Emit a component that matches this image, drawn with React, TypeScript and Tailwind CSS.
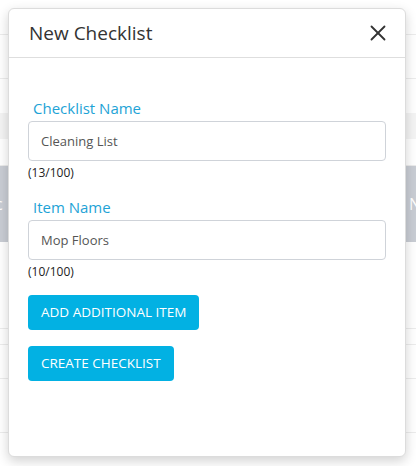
import { X } from "lucide-react";

const font = { fontFamily: '"Open Sans", "Noto Sans", Arial, sans-serif' };

const Field = ({ label, value, count }: { label: string; value: string; count: string }) => {
  return (
    <div className="flex flex-col">
      <label className="pl-[5px] text-[15px] leading-[20px] text-[#1ea3d6]">{label}</label>
      <input
        readOnly
        value={value}
        className="mt-[3px] h-[40px] w-full rounded-[4px] border border-[#cfd3d9] px-3 text-[13px] text-[#555] outline-none"
      />
      <span className="mt-[2px] text-[12px] leading-[20px] text-[#222]">{count}</span>
    </div>
  );
};

export default function App() {
  return (
    <div className="relative h-[466px] w-[416px] overflow-hidden bg-white" style={font}>
      {/* page behind the dialog */}
      <div className="flex flex-col">
        <div className="h-[35px] border-b border-[#ececec]" />
        <div className="h-[44px] border-b border-[#ececec]" />
        <div className="h-[34px]" />
        <div className="h-[26px] bg-[#f4f4f4]" />
        <div className="h-[27px] border-b border-[#ececec]" />
        <div className="flex h-[76px] items-center justify-between bg-[#c9cdd4] px-[1px] text-[16px] text-white">
          <span className="-ml-[6px]">c</span>
          <span className="-mr-[6px]">N</span>
        </div>
        <div className="h-[87px] border-b border-[#ececec]" />
        <div className="h-[16px] border-b border-[#ececec]" />
        <div className="h-[34px] border-b border-[#ececec]" />
        <div className="h-[54px] border-b border-[#ececec]" />
      </div>

      {/* dialog */}
      <div className="absolute left-[8px] top-[8px] flex h-[449px] w-[398px] flex-col rounded-[6px] border border-[#dcdcdc] bg-white shadow-[0_4px_12px_rgba(0,0,0,0.18)]">
        <div className="flex h-[49px] items-center justify-between border-b border-[#dedede] pl-[20px] pr-[14px]">
          <h2 className="text-[19px] text-[#333]">New Checklist</h2>
          <X size={26} strokeWidth={1.7} className="text-[#333]" />
        </div>
        <div className="flex flex-col px-[19px] pt-[40px]">
          <Field label="Checklist Name" value="Cleaning List" count="(13/100)" />
          <div className="mt-[14px]">
            <Field label="Item Name" value="Mop Floors" count="(10/100)" />
          </div>
          <div className="mt-[13px] flex flex-col items-start gap-[16px]">
            <button className="h-[35px] rounded-[4px] bg-[#02b1e3] px-[13px] text-[13.5px] text-white">
              ADD ADDITIONAL ITEM
            </button>
            <button className="h-[35px] rounded-[4px] bg-[#02b1e3] px-[13px] text-[13.5px] text-white">
              CREATE CHECKLIST
            </button>
          </div>
        </div>
      </div>
    </div>
  );
}
